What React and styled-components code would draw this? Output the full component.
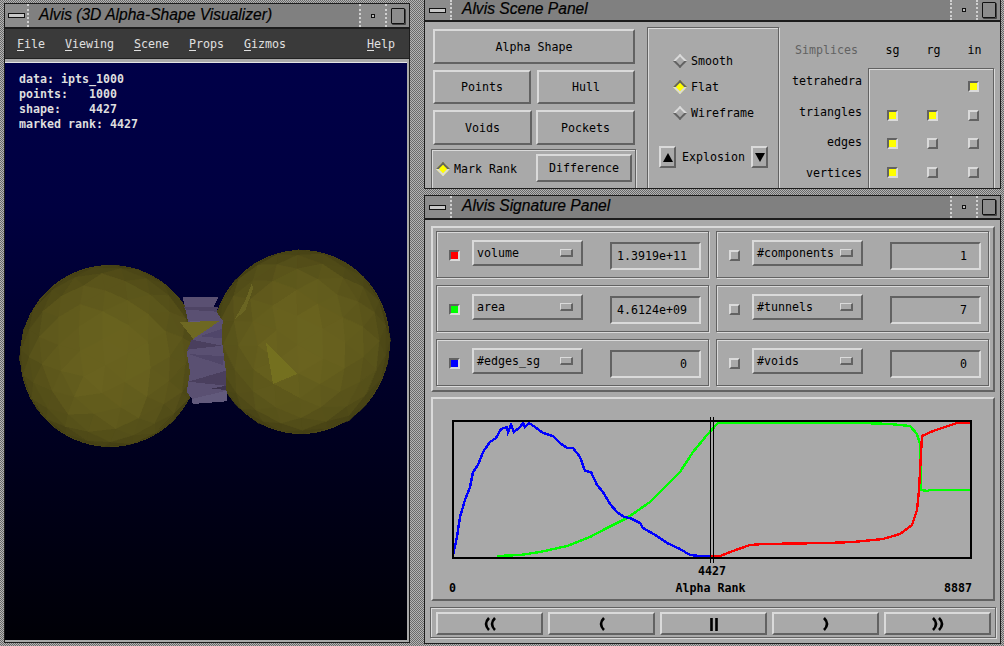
import React from "react";
import styled, { createGlobalStyle, css } from "styled-components";

const GlobalStyle = createGlobalStyle`
  html, body { margin: 0; padding: 0; background: #777; }
  #root { width: 1004px; height: 646px; overflow: hidden; }
`;

const LIGHT = "#dadada";
const DARK = "#626262";
const FACE = "#a9a9a9";
const mono = `"DejaVu Sans Mono", "Liberation Mono", monospace`;

const stipple = css`
  background: repeating-conic-gradient(#b4b4b4 0 25%, #6a6a6a 0 50%) 0 0 / 2px 2px;
`;
const raised = css`
  border-style: solid;
  border-color: ${LIGHT} ${DARK} ${DARK} ${LIGHT};
  background: ${FACE};
  box-sizing: border-box;
`;
const sunken = css`
  border-style: solid;
  border-color: ${DARK} ${LIGHT} ${LIGHT} ${DARK};
  background: ${FACE};
  box-sizing: border-box;
`;
const etched = css`
  box-sizing: border-box;
  border: 1px solid ${DARK};
  box-shadow: inset 1px 1px 0 ${LIGHT}, 1px 1px 0 ${LIGHT};
`;

const Desktop = styled.div`
  ${stipple}
  display: flex;
  width: 1004px;
  height: 646px;
  overflow: hidden;
  font-family: ${mono};
  font-size: 11.63px;
  color: #000;
`;

const MainWindow = styled.div`
  display: flex;
  flex-direction: column;
  box-sizing: border-box;
  width: 406px;
  height: 640px;
  margin: 3px 0 0 4px;
  border: 1px solid #1c1c1c;
  background: ${FACE};
`;
const SideColumn = styled.div`
  display: flex;
  flex-direction: column;
  width: 577px;
  margin-left: 14px;
`;
const PanelWindow = styled.div`
  display: flex;
  flex-direction: column;
  box-sizing: border-box;
  border: 1px solid #1c1c1c;
  border-top-width: ${(p) => (p.$cut ? 0 : 1)}px;
  height: ${(p) => p.$h}px;
  margin-top: ${(p) => p.$top || 0}px;
  background: ${FACE};
`;

/* window manager title bar */
const TitleBar = styled.div`
  display: flex;
  flex: none;
  box-sizing: border-box;
  height: ${(p) => p.$h}px;
  border-bottom: 2px solid #1c1c1c;
  background: #808080;
`;
const TitleCell = styled.div`
  display: flex;
  align-items: center;
  justify-content: center;
  flex: none;
  width: ${(p) => p.$w}px;
  background: #8c8c8c;
  border-left: ${(p) => (p.$sep ? "2px dotted #d0d0d0" : "0")};
  border-right: ${(p) => (p.$end ? "2px dotted #d0d0d0" : "0")};
`;
const TitleText = styled.div`
  flex: 1;
  padding: 0 0 2px 10px;
  font: italic 400 15.6px/1 "Liberation Sans", Arial, sans-serif;
  -webkit-text-stroke: 0.2px #000;
  display: flex;
  align-items: center;
  white-space: nowrap;
`;
const BarGlyph = styled.div`
  width: 15px;
  height: 3px;
  background: #c8c8c8;
  border: 1px solid #111;
`;
const DotGlyph = styled.div`
  width: 2px;
  height: 2px;
  background: #bbb;
  border: 1.5px solid #111;
`;
const MaxGlyph = styled.div`
  width: 12px;
  height: 14px;
  border: 1.5px solid #111;
  border-radius: 1px;
  box-shadow: 1px 1px 0 #444;
`;

const Bar = ({ title, h, menuW = 25 }) => (
  <TitleBar $h={h}>
    <TitleCell $w={menuW} $end>
      <BarGlyph />
    </TitleCell>
    <TitleText>{title}</TitleText>
    <TitleCell $w={24} $sep>
      <DotGlyph />
    </TitleCell>
    <TitleCell $w={22} $sep>
      <MaxGlyph />
    </TitleCell>
  </TitleBar>
);

/* left window */
const MenuBar = styled.div`
  display: flex;
  flex: none;
  gap: 20px;
  align-items: center;
  height: 30px;
  padding: 0 14px 0 12px;
  box-sizing: border-box;
  background: #3a3a3a;
  border-bottom: 1px solid #222;
  color: #e0e0e0;
  line-height: 30px;
`;
const MenuItem = styled.span`
  margin-left: ${(p) => (p.$right ? "auto" : 0)};
  u { text-underline-offset: 2px; }
`;
const Canvas = styled.div`
  position: relative;
  flex: none;
  height: 577px;
  margin: 3px 2px 0 0;
  background: linear-gradient(#000048 0%, #000040 25%, #00002c 50%, #000018 75%, #000006 100%);
  border-top: 1px solid #e4e4e4;
`;
const Readout = styled.pre`
  position: absolute;
  left: 14px;
  top: 9px;
  margin: 0;
  font: 700 11.63px/15px ${mono};
  color: #dedede;
`;
const SceneSvg = styled.svg`
  display: block;
  width: 402px;
  height: 577px;
`;

/* shared controls */
const Button = styled.div`
  ${raised}
  border-width: 2px;
  display: flex;
  align-items: center;
  justify-content: center;
  width: ${(p) => (p.$w ? `${p.$w}px` : "auto")};
  height: ${(p) => p.$h}px;
  flex: ${(p) => (p.$w ? "none" : 1)};
`;
const Check = styled.div`
  ${(p) => (p.$on ? sunken : raised)}
  flex: none;
  width: 11px;
  height: 11px;
  border-width: 2px;
  background: ${(p) => p.$on || FACE};
`;
const Diamond = styled.div`
  ${(p) => (p.$on ? sunken : raised)}
  flex: none;
  width: 10px;
  height: 10px;
  border-width: 2px;
  transform: rotate(45deg);
  background: ${(p) => (p.$on ? "#ffff00" : FACE)};
`;
const Radio = styled.div`
  display: flex;
  align-items: center;
  gap: 6px;
  height: 26px;
`;

/* scene panel */
const SceneBody = styled.div`
  display: flex;
  flex: 1;
  min-height: 0;
  overflow: hidden;
  padding-left: 6px;
`;
const ShapeColumn = styled.div`
  display: flex;
  flex-direction: column;
  width: 205px;
  padding-top: 7px;
`;
const ShapeRow = styled.div`
  display: flex;
  justify-content: space-between;
  margin: ${(p) => p.$top}px 1px 0 2px;
`;
const MarkGroup = styled.div`
  ${etched}
  display: flex;
  flex: none;
  align-items: flex-start;
  justify-content: space-between;
  height: 44px;
  margin-top: 4px;
  padding: 4px 3px 0 6px;
`;
const MarkLabel = styled(Radio)`
  height: 30px;
`;
const RenderGroup = styled.div`
  ${etched}
  flex: none;
  width: 132px;
  height: 172px;
  margin: 5px 0 0 11px;
  padding: 20px 0 0 11px;
`;
const RadioList = styled.div`
  padding-left: 16px;
`;
const ExplosionRow = styled.div`
  display: flex;
  align-items: center;
  justify-content: space-between;
  width: 109px;
  height: 22px;
  margin-top: 20px;
`;
const ArrowTip = styled.div`
  width: 0;
  height: 0;
  border-left: 5px solid transparent;
  border-right: 5px solid transparent;
  border-${(p) => (p.$down ? "top" : "bottom")}: 9px solid #000;
`;
const SimplexColumn = styled.div`
  flex: 1;
  padding: 16px 0 0 16px;
`;
const SimplexHead = styled.div`
  display: grid;
  grid-template-columns: 77px repeat(3, 41px);
  height: 24px;
  align-items: center;
  justify-items: center;
`;
const HeadTitle = styled.span`
  justify-self: start;
  color: ${DARK};
`;
const SimplexBody = styled.div`
  display: flex;
  gap: 6px;
  margin-top: 4px;
`;
const SimplexNames = styled.div`
  display: flex;
  flex-direction: column;
  align-items: flex-end;
  width: 67px;
`;
const SimplexName = styled.div`
  height: 30.6px;
  line-height: 30.6px;
`;
const SimplexBox = styled.div`
  ${etched}
  display: grid;
  grid-template-columns: repeat(3, 40.5px);
  grid-auto-rows: 28.7px;
  justify-items: center;
  align-items: center;
  width: 126px;
  height: 130px;
  margin-top: 2px;
  padding: 3px 0 0 3px;
`;

/* signature panel */
const SignatureBody = styled.div`
  display: flex;
  flex-direction: column;
  flex: 1;
  padding: 6px 0 0 6px;
`;
const MeterPanel = styled.div`
  ${raised}
  border-width: 2px;
  display: grid;
  grid-template-columns: 273px 273px;
  grid-auto-rows: 47px;
  gap: 7px;
  width: 564px;
  height: 166px;
  padding: 3px;
`;
const Meter = styled.div`
  ${etched}
  display: flex;
  align-items: flex-start;
  padding: 18px 0 0 12px;
`;
const Picker = styled.div`
  ${raised}
  border-width: 2px;
  display: flex;
  align-items: center;
  justify-content: space-between;
  flex: none;
  width: 111px;
  height: 26px;
  margin: -10px 0 0 12px;
  padding: 0 8px 0 3px;
`;
const PickerMark = styled.div`
  ${raised}
  border-width: 1px 2px 2px 1px;
  width: 13px;
  height: 8px;
  margin-top: -1px;
`;
const ValueField = styled.div`
  ${sunken}
  border-width: 2px;
  flex: none;
  width: 91px;
  height: 28px;
  margin: -8px 0 0 27px;
  padding: 0 12px 0 0;
  line-height: 24px;
  text-align: right;
`;
const ChartPanel = styled.div`
  ${raised}
  border-width: 2px;
  width: 564px;
  height: 204px;
  margin-top: 5px;
  padding: 21px 0 0 19px;
`;
const ChartSvg = styled.svg`
  display: block;
  width: 520px;
  height: 139px;
  overflow: visible;
`;
const RankLabel = styled.div`
  width: 520px;
  margin-top: 5px;
  height: 14px;
  line-height: 14px;
  text-align: center;
  font-weight: 700;
`;
const AxisRow = styled.div`
  display: grid;
  grid-template-columns: 1fr auto 1fr;
  width: 523px;
  margin: 3px 0 0 -3px;
  line-height: 14px;
  font-weight: 700;
`;
const AxisEnd = styled.span`
  text-align: ${(p) => (p.$end ? "right" : "left")};
`;
const Transport = styled.div`
  ${etched}
  display: flex;
  gap: 5px;
  width: 566px;
  height: 31px;
  margin: 6px 0 0 -1px;
  padding: 4px 4px 0 5px;
`;
const GlyphSvg = styled.svg`
  width: 16px;
  height: 16px;
  stroke: #000;
  stroke-width: 2.6;
  fill: none;
`;

const Chevrons = ({ d }) => (
  <GlyphSvg viewBox="0 0 16 16">
    {d.map((p) => (
      <path key={p} d={p} />
    ))}
  </GlyphSvg>
);

/* flat shaded icosphere, the reference is an old GL render */
const buildSphere = (cx, cy, rx, ry, seed, tilt) => {
  const t = (1 + Math.sqrt(5)) / 2;
  let verts = [
    [-1, t, 0], [1, t, 0], [-1, -t, 0], [1, -t, 0],
    [0, -1, t], [0, 1, t], [0, -1, -t], [0, 1, -t],
    [t, 0, -1], [t, 0, 1], [-t, 0, -1], [-t, 0, 1],
  ];
  let faces = [
    [0, 11, 5], [0, 5, 1], [0, 1, 7], [0, 7, 10], [0, 10, 11],
    [1, 5, 9], [5, 11, 4], [11, 10, 2], [10, 7, 6], [7, 1, 8],
    [3, 9, 4], [3, 4, 2], [3, 2, 6], [3, 6, 8], [3, 8, 9],
    [4, 9, 5], [2, 4, 11], [6, 2, 10], [8, 6, 7], [9, 8, 1],
  ];
  const norm = (v) => {
    const l = Math.hypot(v[0], v[1], v[2]);
    return [v[0] / l, v[1] / l, v[2] / l];
  };
  verts = verts.map(norm);
  for (let s = 0; s < 2; s++) {
    const cache = {};
    const next = [];
    const mid = (a, b) => {
      const k = a < b ? `${a}_${b}` : `${b}_${a}`;
      if (cache[k] === undefined) {
        verts.push(norm(verts[a].map((c, i) => c + verts[b][i])));
        cache[k] = verts.length - 1;
      }
      return cache[k];
    };
    faces.forEach(([a, b, c]) => {
      const ab = mid(a, b), bc = mid(b, c), ca = mid(c, a);
      next.push([a, ab, ca], [b, bc, ab], [c, ca, bc], [ab, bc, ca]);
    });
    faces = next;
  }
  let rnd = seed;
  const rand = () => {
    rnd = (rnd * 16807) % 2147483647;
    return rnd / 2147483647;
  };
  const cs = Math.cos(tilt), sn = Math.sin(tilt);
  const pts = verts.map((v) => {
    const w = 1 + (rand() - 0.5) * 0.018;
    return [(v[0] * cs - v[2] * sn) * w, (v[1] * cs - (v[0] * sn + v[2] * cs) * sn) * w, (v[1] * sn + (v[0] * sn + v[2] * cs) * cs) * w];
  });
  const out = [];
  faces.forEach((f) => {
    const [a, b, c] = f.map((i) => pts[i]);
    const u = [b[0] - a[0], b[1] - a[1], b[2] - a[2]];
    const v = [c[0] - a[0], c[1] - a[1], c[2] - a[2]];
    const n = norm([u[1] * v[2] - u[2] * v[1], u[2] * v[0] - u[0] * v[2], u[0] * v[1] - u[1] * v[0]]);
    const front = (a[2] + b[2] + c[2]) / 3;
    if (front <= 0) return;
    const nz = Math.abs(n[2]);
    const shade = 0.58 + 0.38 * nz + (rand() - 0.5) * 0.035;
    const col = `rgb(${Math.round(110 * shade)},${Math.round(103 * shade)},${Math.round(32 * shade)})`;
    out.push({
      z: front,
      col,
      pts: [a, b, c].map((p) => `${(cx + p[0] * rx).toFixed(1)},${(cy + p[1] * ry).toFixed(1)}`).join(" "),
    });
  });
  return out.sort((p, q) => p.z - q.z);
};

const LEFT_BALL = { cx: 105, cy: 293, rx: 90, ry: 91 };
const RIGHT_BALL = { cx: 296, cy: 279, rx: 89, ry: 92 };
const leftFacets = buildSphere(LEFT_BALL.cx, LEFT_BALL.cy, LEFT_BALL.rx, LEFT_BALL.ry, 4711, 0.35);
const rightFacets = buildSphere(RIGHT_BALL.cx, RIGHT_BALL.cy, RIGHT_BALL.rx, RIGHT_BALL.ry, 9137, 0.6);

const Sphere = ({ ball, facets }) => (
  <g shapeRendering="crispEdges">
    <ellipse cx={ball.cx} cy={ball.cy} rx={ball.rx} ry={ball.ry} fill="#4a4516" />
    {facets.map((f, i) => (
      <polygon key={i} points={f.pts} fill={f.col} stroke={f.col} strokeWidth="0.6" />
    ))}
  </g>
);

// the tube lies over both spheres; outlines read at 3x, so map them back to canvas px
const at3x = (list) => list.map(([x, y]) => `${(x / 3 - 5).toFixed(1)},${(y / 3 + 176).toFixed(1)}`).join(" ");
const tube = [
  ["#5a5072", [[548, 175], [655, 175], [640, 205], [668, 245], [665, 300], [678, 400], [680, 487], [578, 495], [585, 490], [560, 460], [570, 400], [560, 340], [580, 298], [565, 250]]],
  ["#4e4464", [[552, 205], [655, 205], [650, 218], [560, 212]]],
  ["#625a7c", [[565, 245], [665, 245], [600, 262]]],
  ["#50466a", [[600, 292], [665, 270], [665, 298]]],
  ["#4a3f5e", [[575, 302], [665, 320], [562, 332]]],
  ["#504668", [[565, 345], [672, 352], [668, 378]]],
  ["#4a3f5e", [[565, 428], [678, 395], [678, 440]]],
  ["#3e3450", [[628, 450], [678, 440], [678, 452]]],
  ["#625a7c", [[575, 480], [680, 455], [680, 487], [578, 495]]],
];
const spark = [
  ["#6e6822", [[540, 250], [660, 245], [580, 300]]],
];

const Viewer = () => (
  <SceneSvg viewBox="0 0 402 577">
    <Sphere ball={LEFT_BALL} facets={leftFacets} />
    <Sphere ball={RIGHT_BALL} facets={rightFacets} />
    <g shapeRendering="crispEdges">
      {tube.map(([c, p], i) => (
        <polygon key={i} points={at3x(p)} fill={c} />
      ))}
      {spark.map(([c, p], i) => (
        <polygon key={i} points={at3x(p)} fill={c} />
      ))}
      <polygon points="261,280 292,311 268,321" fill="#74701f" />
      <polygon points="247,220 240,238 230,256 240,248 248,226" fill="#6a6522" />
    </g>
  </SceneSvg>
);

/* curves read off the reference, x/y in chart px */
const blue = [
  [1, 135], [5, 117], [8, 97], [13, 80], [18, 67], [21, 52], [26, 45], [31, 32], [38, 22], [44, 18],
  [49, 9], [55, 7], [56, 12], [59, 5], [62, 12], [68, 7], [71, 3], [73, 7], [77, 3], [83, 7], [91, 13],
  [101, 16], [108, 23], [115, 28], [121, 28], [128, 37], [133, 51], [139, 52], [145, 65], [151, 72],
  [158, 84], [165, 92], [172, 97], [178, 98], [188, 103], [191, 108], [205, 116], [215, 123], [228, 129],
  [238, 135], [248, 136], [258, 136],
];
const green = [
  [45, 136], [68, 135], [88, 132], [115, 126], [138, 117], [155, 108], [175, 98], [198, 82], [215, 65],
  [228, 52], [241, 32], [255, 15], [266, 3], [268, 3], [290, 3], [410, 3], [438, 4], [458, 6], [465, 14],
  [468, 24], [469, 70], [470, 70], [475, 71], [478, 70], [518, 70],
];
const red = [
  [248, 136], [268, 136], [281, 131], [298, 125], [311, 124], [375, 123], [401, 122], [431, 119], [448, 114],
  [460, 105], [465, 90], [467, 70], [470, 16], [481, 11], [505, 3], [518, 3],
];
const toPoints = (list) => list.map((p) => p.join(",")).join(" ");

const RankChart = () => (
  <ChartSvg viewBox="0 0 520 139">
    <g fill="none" strokeWidth="2.4" shapeRendering="crispEdges">
      <polyline points={toPoints(green)} stroke="#00ff00" />
      <polyline points={toPoints(red)} stroke="#ff0000" />
      <polyline points={toPoints(blue)} stroke="#0000ff" />
      <rect x="1" y="1" width="518" height="137" stroke="#000" strokeWidth="2" />
      <path d="M258.5 -3V143M261.5 -3V143" stroke="#000" strokeWidth="1" />
    </g>
  </ChartSvg>
);

const meters = [
  [["#ff0000", "volume", "1.3919e+11"], [null, "#components", "1"]],
  [["#00ff00", "area", "4.6124e+09"], [null, "#tunnels", "7"]],
  [["#0000ff", "#edges_sg", "0"], [null, "#voids", "0"]],
];
const simplices = [
  [null, null, "#ffff00"],
  ["#ffff00", "#ffff00", null],
  ["#ffff00", null, null],
  ["#ffff00", null, null],
];

export default function App() {
  return (
    <Desktop>
      <GlobalStyle />
      <MainWindow>
        <Bar title="Alvis (3D Alpha-Shape Visualizer)" h={25} menuW={22} />
        <MenuBar>
          <MenuItem><u>F</u>ile</MenuItem>
          <MenuItem><u>V</u>iewing</MenuItem>
          <MenuItem><u>S</u>cene</MenuItem>
          <MenuItem><u>P</u>rops</MenuItem>
          <MenuItem><u>G</u>izmos</MenuItem>
          <MenuItem $right><u>H</u>elp</MenuItem>
        </MenuBar>
        <Canvas>
          <Viewer />
          <Readout>{"data: ipts_1000\npoints:   1000\nshape:    4427\nmarked rank: 4427"}</Readout>
        </Canvas>
      </MainWindow>
      <SideColumn>
        <PanelWindow $cut $h={189}>
          <Bar title="Alvis Scene Panel" h={22} />
          <SceneBody>
            <ShapeColumn>
              <ShapeRow $top={0}>
                <Button $h={35}>Alpha Shape</Button>
              </ShapeRow>
              <ShapeRow $top={6}>
                <Button $w={98} $h={34}>Points</Button>
                <Button $w={98} $h={34}>Hull</Button>
              </ShapeRow>
              <ShapeRow $top={6}>
                <Button $w={99} $h={35}>Voids</Button>
                <Button $w={99} $h={35}>Pockets</Button>
              </ShapeRow>
              <MarkGroup>
                <MarkLabel>
                  <Diamond $on />
                  Mark Rank
                </MarkLabel>
                <Button $w={96} $h={28}>Difference</Button>
              </MarkGroup>
            </ShapeColumn>
            <RenderGroup>
              <RadioList>
                <Radio><Diamond />Smooth</Radio>
                <Radio><Diamond $on />Flat</Radio>
                <Radio><Diamond />Wireframe</Radio>
              </RadioList>
              <ExplosionRow>
                <Button $w={17} $h={22}><ArrowTip /></Button>
                Explosion
                <Button $w={17} $h={22}><ArrowTip $down /></Button>
              </ExplosionRow>
            </RenderGroup>
            <SimplexColumn>
              <SimplexHead>
                <HeadTitle>Simplices</HeadTitle>
                <span>sg</span>
                <span>rg</span>
                <span>in</span>
              </SimplexHead>
              <SimplexBody>
                <SimplexNames>
                  <SimplexName>tetrahedra</SimplexName>
                  <SimplexName>triangles</SimplexName>
                  <SimplexName>edges</SimplexName>
                  <SimplexName>vertices</SimplexName>
                </SimplexNames>
                <SimplexBox>
                  {simplices.flat().map((on, i) =>
                    i < 2 ? <span key={i} /> : <Check key={i} $on={on} />
                  )}
                </SimplexBox>
              </SimplexBody>
            </SimplexColumn>
          </SceneBody>
        </PanelWindow>
        <PanelWindow $top={6} $h={449}>
          <Bar title="Alvis Signature Panel" h={24} />
          <SignatureBody>
            <MeterPanel>
              {meters.flat().map(([color, name, value]) => (
                <Meter key={name}>
                  <Check $on={color} />
                  <Picker>
                    {name}
                    <PickerMark />
                  </Picker>
                  <ValueField>{value}</ValueField>
                </Meter>
              ))}
            </MeterPanel>
            <ChartPanel>
              <RankChart />
              <RankLabel>4427</RankLabel>
              <AxisRow>
                <AxisEnd>0</AxisEnd>
                <span>Alpha Rank</span>
                <AxisEnd $end>8887</AxisEnd>
              </AxisRow>
            </ChartPanel>
            <Transport>
              <Button $h={23}><Chevrons d={["M7 2Q1 8 7 14", "M13 2Q7 8 13 14"]} /></Button>
              <Button $h={23}><Chevrons d={["M10 2Q4 8 10 14"]} /></Button>
              <Button $h={23}><Chevrons d={["M5.5 2V15M10.5 2V15"]} /></Button>
              <Button $h={23}><Chevrons d={["M6 2Q12 8 6 14"]} /></Button>
              <Button $h={23}><Chevrons d={["M3 2Q9 8 3 14", "M9 2Q15 8 9 14"]} /></Button>
            </Transport>
          </SignatureBody>
        </PanelWindow>
      </SideColumn>
    </Desktop>
  );
}
